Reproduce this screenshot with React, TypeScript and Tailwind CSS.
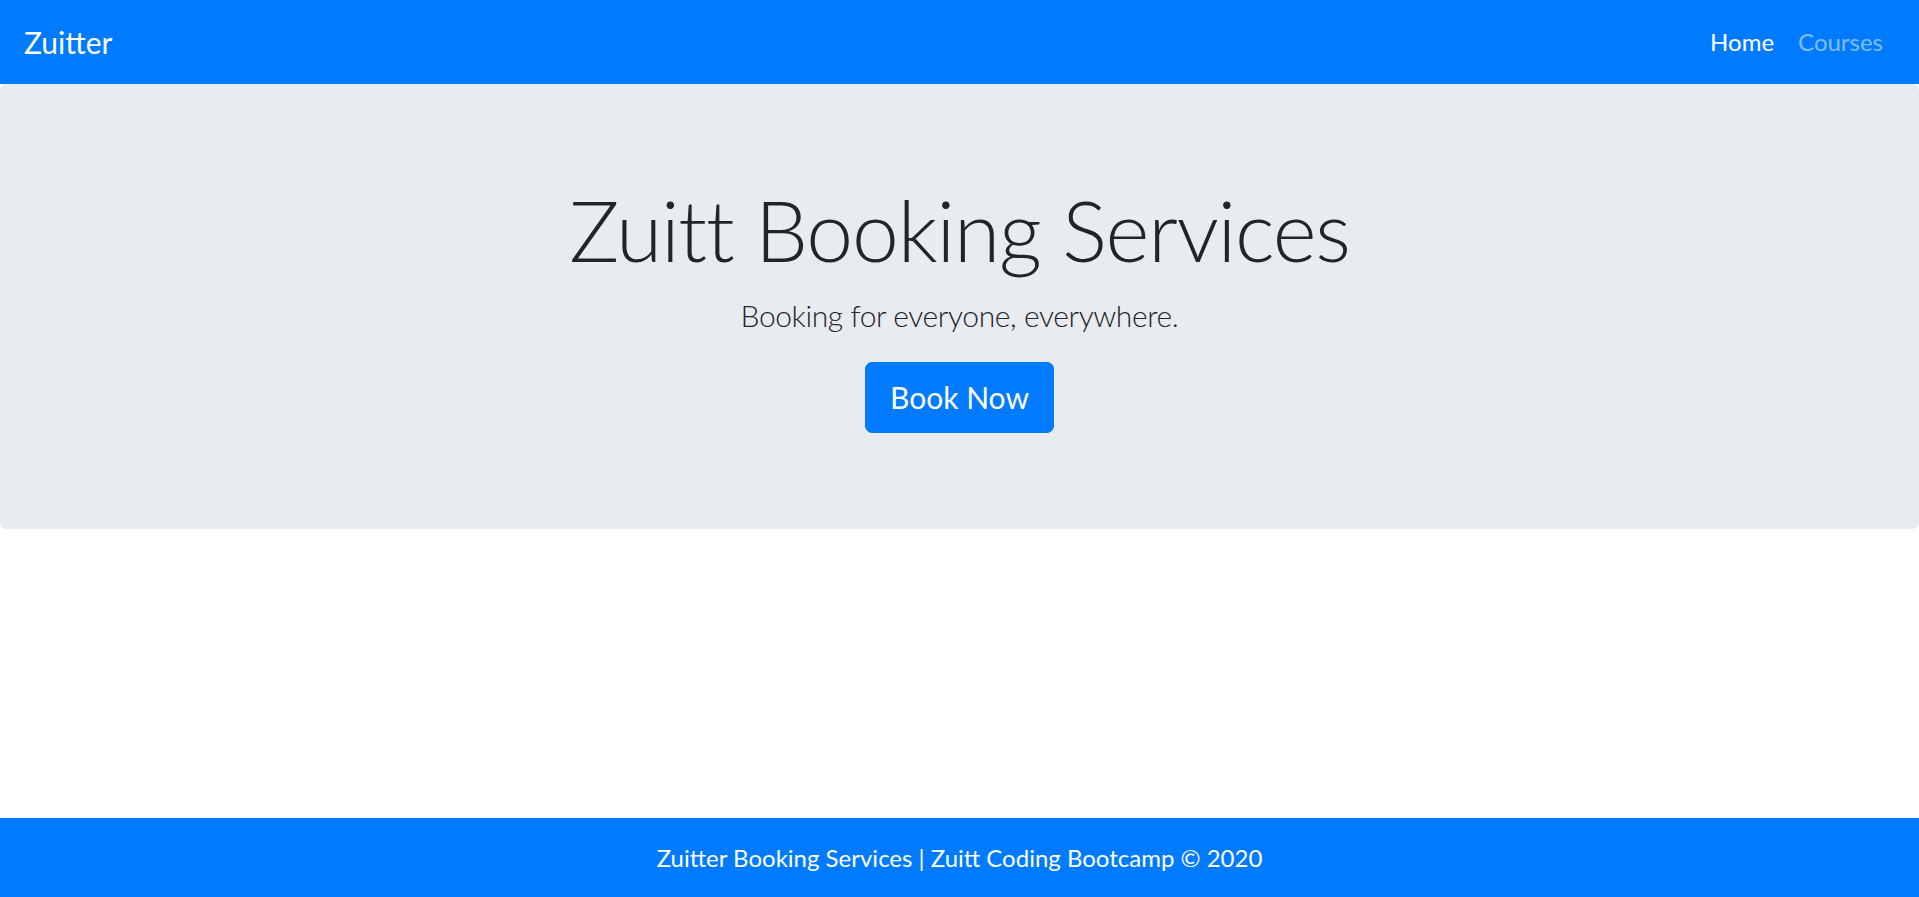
import React from 'react';

const font = "font-['Segoe_UI','Lato','Open_Sans',sans-serif]";

function NavBar() {
  return (
    <nav className="flex h-[84px] items-center justify-between bg-[#007bff] px-6">
      <a href="#" className="text-[30px] leading-[1.5] text-white">
        Zuitter
      </a>
      <div className="flex items-center text-[24px] leading-[1.5]">
        <a href="#" className="px-3 text-white">Home</a>
        <a href="#" className="px-3 text-white/50">Courses</a>
      </div>
    </nav>
  );
}

function Banner() {
  return (
    <div className="mb-12 rounded-[7px] bg-[#e9ecef] px-12 py-24 text-center text-[#212529]">
      <h1 className="mb-3 text-[84px] font-light leading-[1.2] tracking-[-1.2px]">Zuitt Booking Services</h1>
      <p className="mb-6 text-[30px] font-light leading-[1.5] tracking-[-0.4px]">Booking for everyone, everywhere.</p>
      <a
        href="#"
        className="inline-block rounded-[7px] border border-[#007bff] bg-[#007bff] px-6 py-3 text-[30px] leading-[1.5] text-white"
      >
        Book Now
      </a>
    </div>
  );
}

export default function App() {
  return (
    <div className={`flex min-h-screen flex-col bg-white ${font}`}>
      <NavBar />
      <main className="flex-1">
        <Banner />
      </main>
      {/* footer sits on the bottom edge */}
      <footer className="flex h-[79px] items-center justify-center bg-[#007bff] text-[24px] text-white">
        Zuitter Booking Services | Zuitt Coding Bootcamp © 2020
      </footer>
    </div>
  );
}
